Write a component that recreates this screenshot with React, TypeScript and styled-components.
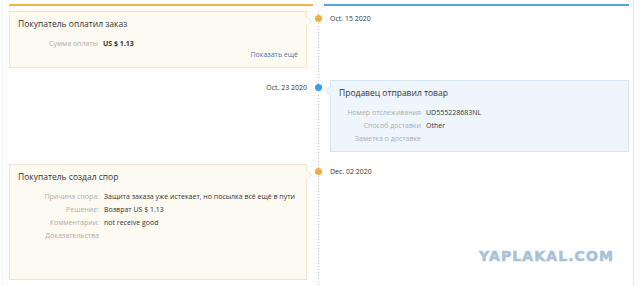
import React from 'react'
import styled, { createGlobalStyle, css } from 'styled-components'

type Tone = 'buyer' | 'seller'
type Side = 'left' | 'right'

interface IRow {
  label: string
  value?: string
  bold?: boolean
}

interface IEvent {
  date: string
  tone: Tone
  side: Side
  title: string
  labelWidth: number
  rows: IRow[]
  more?: boolean
  extra?: number
}

const events: IEvent[] = [
  {
    date: 'Oct. 15 2020',
    tone: 'buyer',
    side: 'left',
    title: 'Покупатель оплатил заказ',
    labelWidth: 80,
    rows: [{ label: 'Сумма оплаты', value: 'US $ 1.13', bold: true }],
    more: true,
    extra: 2
  },
  {
    date: 'Oct. 23 2020',
    tone: 'seller',
    side: 'right',
    title: 'Продавец отправил товар',
    labelWidth: 82,
    rows: [
      { label: 'Номер отслеживания', value: 'UD555228683NL' },
      { label: 'Способ доставки', value: 'Other' },
      { label: 'Заметка о доставке' }
    ]
  },
  {
    date: 'Dec. 02 2020',
    tone: 'buyer',
    side: 'left',
    title: 'Покупатель создал спор',
    labelWidth: 81,
    rows: [
      { label: 'Причина спора:', value: 'Защита заказа уже истекает, но посылка всё ещё в пути' },
      { label: 'Решение:', value: 'Возврат US $ 1.13' },
      { label: 'Комментарии:', value: 'not receive good' },
      { label: 'Доказательства' }
    ],
    extra: 31
  }
]

const colors = {
  buyer: { line: '#f4b347', dot: '#f2ac3c', bg: '#fdfaf2', border: '#f0e5cb' },
  seller: { line: '#4eaadf', dot: '#3a9ee0', bg: '#eef6fc', border: '#d2e6f4' }
}

const App: React.FC = () => {
  return (
    <>
      <GlobalStyle />
      <Page>
        <Header>
          <Bar tone="buyer" />
          <span />
          <Bar tone="seller" />
        </Header>
        <Timeline>
          {events.map(event => {
            const card = (
              <Card tone={event.tone} side={event.side} extra={event.extra}>
                <Title>{event.title}</Title>
                <Details labelWidth={event.labelWidth}>
                  {event.rows.map(row => (
                    <React.Fragment key={row.label}>
                      <Label>{row.label}</Label>
                      <Value bold={row.bold}>{row.value || ''}</Value>
                    </React.Fragment>
                  ))}
                </Details>
                {event.more && <More>Показать ещё</More>}
              </Card>
            )
            const date = <DateText side={event.side}>{event.date}</DateText>
            return (
              <React.Fragment key={event.date}>
                {event.side === 'left' ? card : date}
                <Dot tone={event.tone} />
                {event.side === 'left' ? date : card}
              </React.Fragment>
            )
          })}
        </Timeline>
        <Watermark>YAPLAKAL.COM</Watermark>
      </Page>
    </>
  )
}

const GlobalStyle = createGlobalStyle`
  html, body {
    margin: 0;
    padding: 0;
    background: #fff;
  }
  body {
    font-family: 'Open Sans', 'Noto Sans', sans-serif;
    color: #333;
  }
`

const Page = styled.div`
  position: relative;
  box-sizing: border-box;
  width: 632px;
  height: 286px;
  margin-left: 2px;
  padding: 4px 0 0 6px;
  border-left: 1px solid #f2f2f2;
  border-right: 1px solid #e6e6e6;
  overflow: hidden;
`

const Header = styled.div`
  display: grid;
  grid-template-columns: 304px 11px 305px;
`

const Bar = styled.div<{ tone: Tone }>`
  height: 2px;
  background: ${p => colors[p.tone].line};
`

const Timeline = styled.div`
  display: grid;
  grid-template-columns: 298px 23px 299px;
  row-gap: 12px;
  align-items: start;
  margin-top: 5px;
  padding-bottom: 20px;
  background-image: linear-gradient(to bottom, #c4c4c4 50%, transparent 50%);
  background-size: 1px 3px;
  background-repeat: repeat-y;
  background-position: 309px 0;
`

const Card = styled.div<{ tone: Tone; side: Side; extra?: number }>`
  position: relative;
  box-sizing: border-box;
  padding: 6px 8px ${p => 6 + (p.extra || 0)}px;
  background: ${p => colors[p.tone].bg};
  border: 1px solid ${p => colors[p.tone].border};
  &::before,
  &::after {
    content: '';
    position: absolute;
    top: 5px;
    border: 5px solid transparent;
  }
  ${p =>
    p.side === 'left'
      ? css`
          &::before {
            right: -11px;
            border-left-color: ${colors[p.tone].border};
          }
          &::after {
            right: -10px;
            border-left-color: ${colors[p.tone].bg};
          }
        `
      : css`
          &::before {
            left: -11px;
            border-right-color: ${colors[p.tone].border};
          }
          &::after {
            left: -10px;
            border-right-color: ${colors[p.tone].bg};
          }
        `}
`

const Title = styled.div`
  font-size: 8.5px;
  line-height: 12px;
  color: #333;
`

const Details = styled.div<{ labelWidth: number }>`
  display: grid;
  grid-template-columns: ${p => p.labelWidth}px 1fr;
  column-gap: 5px;
  margin-top: 7px;
  font-size: 7px;
  line-height: 13px;
`

const Label = styled.span`
  text-align: right;
  color: #adadad;
  white-space: nowrap;
`

const Value = styled.span<{ bold?: boolean }>`
  color: #333;
  font-weight: ${p => (p.bold ? 700 : 400)};
  white-space: nowrap;
`

const More = styled.div`
  text-align: right;
  font-size: 7px;
  line-height: 9px;
  color: #3b78b5;
`

const DateText = styled.div<{ side: Side }>`
  padding-top: 3px;
  font-size: 7px;
  line-height: 10px;
  color: #333;
  text-align: ${p => (p.side === 'right' ? 'right' : 'left')};
`

const Dot = styled.div<{ tone: Tone }>`
  justify-self: center;
  width: 7px;
  height: 7px;
  margin-top: 4px;
  border-radius: 50%;
  background: ${p => colors[p.tone].dot};
`

const Watermark = styled.div`
  position: absolute;
  top: 247px;
  right: 19px;
  font-family: 'DejaVu Sans', sans-serif;
  font-size: 14px;
  font-weight: 700;
  line-height: 18px;
  letter-spacing: 1.1px;
  -webkit-text-stroke: 0.6px #a9c2d7;
  color: #a9c2d7;
`

export default App
